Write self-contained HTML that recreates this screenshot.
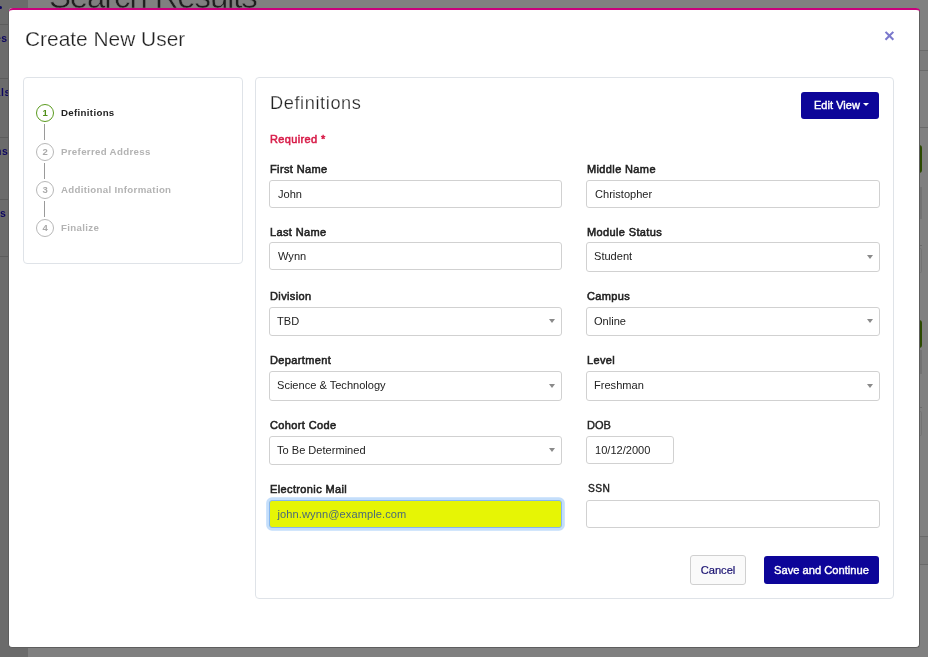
<!DOCTYPE html>
<html lang="en">
<head>
<meta charset="utf-8">
<title>Create New User</title>
<style>
*{box-sizing:border-box;margin:0;padding:0}
html,body{width:928px;height:657px;overflow:hidden}
body{position:relative;background:#808080;font-family:"Liberation Sans",sans-serif;font-size:11px;color:#222}
.abs{position:absolute}
body>*{will-change:transform}
/* background page under overlay */
#side{left:0;top:0;width:28px;height:657px;background:#6b6b6b}
#side .ln{position:absolute;left:0;width:28px;height:1px;background:#5c5c5c}
#side .tx{position:absolute;white-space:nowrap;color:#0d0660;font-size:10.5px;line-height:14px;font-weight:bold;letter-spacing:.6px}
#rstrip{left:919px;top:0;width:9px;height:657px}
#rstrip div{position:absolute;left:0}
#rstrip .ln{width:9px;height:1px;background:#6a6a6a}
#rstrip .band{width:9px;background:#7b7b7b}
#rstrip .grn{width:3px;background:#2c4a00;border-radius:0 3px 3px 0}
#rstrip .dk{width:3px;background:#727272}
#rstrip .bx{width:3px;border:1px solid #737373;border-left:0;border-radius:0 2px 2px 0}
#bgtitle{left:48.5px;top:-23.2px;font-size:33px;letter-spacing:-1.15px;line-height:40px;color:#1f1f1f;white-space:nowrap;-webkit-text-stroke:.5px #808080}
/* modal */
#modal{left:8px;top:8px;width:912px;height:640px;background:#fff;border:1px solid #5e5e5e;border-top:0;border-radius:4px}
#pink{left:8.6px;top:8px;width:910.8px;height:6px;border-top:2px solid #c8007c;border-radius:4px 4px 0 0}
#title{left:25.2px;top:23px;font-size:20.9px;line-height:32px;color:#222;white-space:nowrap;-webkit-text-stroke:.25px #fff}
#close{left:884.2px;top:26px;font-size:18.5px;line-height:20px;color:#7a78cc;font-weight:bold}
.card{border:1px solid #dfe3e8;border-radius:4px;background:#fff}
#steps{left:23px;top:77px;width:220px;height:187px}
#form{left:255px;top:77px;width:639px;height:522px}
.circ{position:absolute;left:36px;width:18px;height:18px;border:1.3px solid #b7b7b7;border-radius:50%;color:#a8a8a8;font-size:9.5px;font-weight:bold;line-height:16px;padding-left:.5px;text-align:center}
.circ.on{border:1.7px solid #5a9a1e;color:#4f8f18;line-height:15px}
.conn{position:absolute;left:44px;width:1px;height:16px;background:#9a9a9a}
.slab{position:absolute;left:61.3px;font-weight:bold;font-size:9.7px;letter-spacing:.32px;line-height:14px;color:#b3b3b3;white-space:nowrap}
.slab.on{color:#222}
h2{position:absolute;left:269.5px;top:90.3px;font-size:18.2px;letter-spacing:.6px;font-weight:normal;line-height:26px;color:#222;white-space:nowrap;-webkit-text-stroke:.25px #fff}
.req{position:absolute;left:269.8px;top:131.8px;font-size:11px;font-weight:normal;line-height:14px;color:#d81e4a;white-space:nowrap;letter-spacing:.36px;-webkit-text-stroke:.55px #d81e4a}
.lab{position:absolute;font-size:11px;font-weight:normal;line-height:14px;color:#222;white-space:nowrap;letter-spacing:.37px;-webkit-text-stroke:.55px #222}
.inp{position:absolute;height:28px;border:1px solid #d1d1d1;border-radius:3px;background:#fff;font-size:11.07px;line-height:26px;padding-left:8px;color:#222;white-space:nowrap}
.sel{height:29px;line-height:27px;padding-left:7px}
.sel:after{content:"";position:absolute;right:6px;top:11px;border-left:3px solid transparent;border-right:3px solid transparent;border-top:4px solid #8a8a8a}
.btn{position:absolute;border-radius:3px;font-size:11.15px;text-align:center;white-space:nowrap}
.pri{background:#0d0599;color:#fff;-webkit-text-stroke:.4px #fff}
.sel.t:after{top:12px}
</style>
</head>
<body>
<div id="side" class="abs">
  <div style="position:absolute;left:-1.5px;top:5.7px;width:3px;height:3px;border-radius:2px;background:#0d0660"></div>
  <div class="ln" style="top:24px"></div>
  <div class="ln" style="top:78px"></div>
  <div class="ln" style="top:137px"></div>
  <div class="ln" style="top:199px"></div>
  <div class="ln" style="top:256px"></div>
  <div class="tx" style="top:30.5px;right:20.2px">Courses</div>
  <div class="tx" style="top:84.7px;right:17px">Journals</div>
  <div class="tx" style="top:143.8px;right:19.6px">Sessions</div>
  <div class="tx" style="top:205.5px;right:21.5px">Reports</div>
</div>
<div id="rstrip" class="abs">
  <div class="ln" style="top:50px"></div>
  <div class="ln" style="top:70px"></div>
  <div class="ln" style="top:127px"></div>
  <div class="band" style="top:51px;height:19px"></div>
  <div class="grn" style="top:145px;height:28px"></div>
  <div class="dk" style="top:187px;height:32px"></div>
  <div class="ln" style="top:245px;width:3px"></div>
  <div class="bx" style="top:248px;height:25px"></div>
  <div class="grn" style="top:320px;height:28px"></div>
  <div class="dk" style="top:350px;height:24px"></div>
  <div class="ln" style="top:407px;width:3px"></div>
  <div class="bx" style="top:411px;height:25px"></div>
  <div class="ln" style="top:536px"></div>
  <div class="ln" style="top:544px"></div>
  <div class="ln" style="top:564px"></div>
  <div class="band" style="top:537px;height:27px"></div>
</div>
<div id="bgtitle" class="abs">Search Results</div>

<div id="modal" class="abs"></div>
<div id="pink" class="abs"></div>
<div id="title" class="abs">Create New User</div>
<div id="close" class="abs">&times;</div>

<div id="steps" class="abs card"></div>
<div class="circ on" style="top:104px">1</div>
<div class="conn" style="top:124px"></div>
<div class="circ" style="top:143px">2</div>
<div class="conn" style="top:163px"></div>
<div class="circ" style="top:181px">3</div>
<div class="conn" style="top:201px"></div>
<div class="circ" style="top:219px">4</div>
<div class="slab on" style="top:106px">Definitions</div>
<div class="slab" style="top:145px">Preferred Address</div>
<div class="slab" style="top:183px">Additional Information</div>
<div class="slab" style="top:221px">Finalize</div>

<div id="form" class="abs card"></div>
<h2>Definitions</h2>
<div class="btn pri" style="left:801px;top:92px;width:78px;height:27px;line-height:27px;font-size:11px;padding-left:3px;letter-spacing:.05px">Edit View <span style="display:inline-block;vertical-align:middle;margin-top:-3px;border-left:3px solid transparent;border-right:3px solid transparent;border-top:3.4px solid #fff"></span></div>
<div class="req">Required *</div>

<div class="lab" style="left:270px;top:162px">First Name</div>
<div class="inp" style="left:269px;top:180px;width:293px">John</div>
<div class="lab" style="left:587.2px;top:162px">Middle Name</div>
<div class="inp" style="left:586px;top:180px;width:294px">Christopher</div>

<div class="lab" style="left:270px;top:225px">Last Name</div>
<div class="inp" style="left:269px;top:242px;width:293px">Wynn</div>
<div class="lab" style="left:587.2px;top:225px">Module Status</div>
<div class="inp sel t" style="left:586px;top:242px;width:294px;height:30px">Student</div>

<div class="lab" style="left:270px;top:289px">Division</div>
<div class="inp sel" style="left:269px;top:307px;width:293px">TBD</div>
<div class="lab" style="left:587.2px;top:289px">Campus</div>
<div class="inp sel" style="left:586px;top:307px;width:294px">Online</div>

<div class="lab" style="left:270px;top:353px">Department</div>
<div class="inp sel t" style="left:269px;top:371px;width:293px;height:30px">Science &amp; Technology</div>
<div class="lab" style="left:587.2px;top:353px">Level</div>
<div class="inp sel t" style="left:586px;top:371px;width:294px;height:30px">Freshman</div>

<div class="lab" style="left:270px;top:418px">Cohort Code</div>
<div class="inp sel" style="left:269px;top:436px;width:293px">To Be Determined</div>
<div class="lab" style="left:587px;top:418px;letter-spacing:0;-webkit-text-stroke-width:.4px">DOB</div>
<div class="inp" style="left:586px;top:436px;width:88px">10/12/2000</div>

<div class="lab" style="left:270px;top:482px">Electronic Mail</div>
<div class="inp" style="left:269px;top:500px;width:293px;background:#e6f505;border-color:#86b7ee;box-shadow:0 0 0 2.8px #c4defb;color:#4a6a78;letter-spacing:.1px;padding-left:7.5px">john.wynn@example.com</div>
<div class="lab" style="left:587.6px;top:482.3px;font-size:10.2px;letter-spacing:.4px;-webkit-text-stroke-width:.4px">SSN</div>
<div class="inp" style="left:586px;top:500px;width:294px"></div>

<div class="btn" style="left:690px;top:555px;width:56px;height:30px;line-height:28px;border:1px solid #d0d0d0;background:#fafafa;color:#170f70;-webkit-text-stroke:.2px #170f70">Cancel</div>
<div class="btn pri" style="left:764px;top:556px;width:115px;height:28px;line-height:28px">Save and Continue</div>
</body>
</html>
